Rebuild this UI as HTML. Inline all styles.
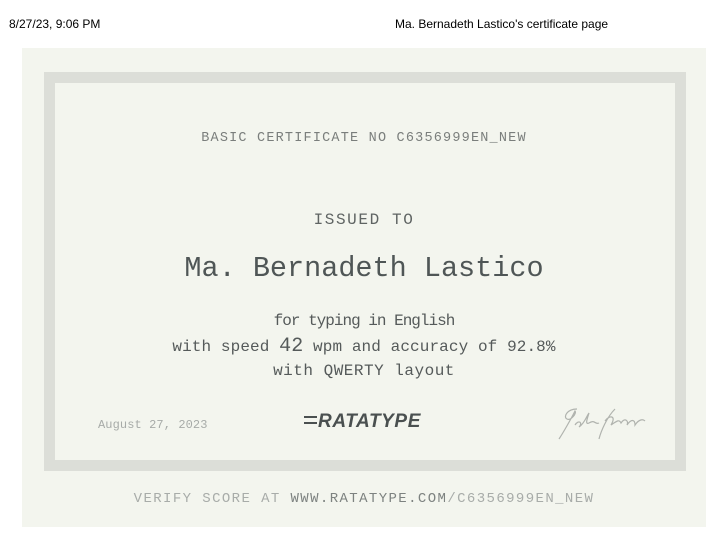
<!DOCTYPE html>
<html><head><meta charset="utf-8"><style>
*{margin:0;padding:0}
body{width:728px;height:539px;background:#fff;position:relative;overflow:hidden;font-family:"Liberation Mono",monospace}
.hdr{position:absolute;top:17px;font:12px "Liberation Sans",sans-serif;color:#000}
.panel{position:absolute;left:22px;top:48px;width:684px;height:479px;background:#f3f5ee}
.frame{position:absolute;left:44px;top:72px;width:620px;height:377px;border:11px solid #dcded8;background:#f3f5ee}
.c{position:absolute;left:0;width:728px;text-align:center;white-space:nowrap;color:#5b6060}
</style></head><body>
<div class="hdr" style="left:9px">8/27/23, 9:06 PM</div>
<div class="hdr" style="left:395px">Ma. Bernadeth Lastico's certificate page</div>
<div class="panel"></div>
<div class="frame"></div>
<div class="c" style="top:131px;font-size:13.5px;color:#7a7e7c;letter-spacing:1.2px">BASIC CERTIFICATE NO C6356999EN_NEW</div>
<div class="c" style="top:211px;font-size:16px;color:#5f6463;letter-spacing:1.6px">ISSUED TO</div>
<div class="c" style="top:252px;font-size:28.5px;color:#4f5656">Ma. Bernadeth Lastico</div>
<div class="c" style="top:312px;font-size:16px;color:#555a5a;letter-spacing:-1px">for typing in English</div>
<div class="c" style="top:335px;font-size:16px;color:#555a5a;letter-spacing:0.1px">with speed <span style="font-size:20px">42</span> wpm and accuracy of 92.8%</div>
<div class="c" style="top:362px;font-size:16px;color:#555a5a;letter-spacing:0.5px">with QWERTY layout</div>
<div style="position:absolute;left:98px;top:418px;font-size:12px;color:#a7aba8;letter-spacing:0.1px">August 27, 2023</div>
<div style="position:absolute;left:304px;top:411px;font:italic bold 19px 'Liberation Sans',sans-serif;color:#4a5050;letter-spacing:0.6px"><span style="display:inline-block;width:13px;height:8px;position:relative;top:-3px;margin-right:1px;border-top:2px solid #4a5050;border-bottom:2px solid #4a5050;box-sizing:border-box"></span>RATATYPE</div>
<svg style="position:absolute;left:555px;top:405px" width="95" height="38" viewBox="0 0 95 38"><path d="M22 4 C12 4 8 12 12 14 C16 16 22 8 20 6 C16 14 8 28 4 34 M20 20 C24 14 28 18 24 22 C30 18 32 10 34 8 C32 14 30 20 34 18 M34 18 C40 14 40 20 44 18 M60 4 C52 12 46 26 44 34 M50 16 C54 10 62 10 56 20 C62 16 64 14 66 18 C70 12 74 16 72 20 C76 14 80 14 80 20 C84 14 88 14 90 16" fill="none" stroke="#b0b3ae" stroke-width="1.2"/></svg>
<div class="c" style="top:491px;font-size:14px;color:#a8aca9;letter-spacing:1.4px">VERIFY SCORE AT <span style="color:#7d8280">WWW.RATATYPE.COM</span>/C6356999EN_NEW</div>
</body></html>
